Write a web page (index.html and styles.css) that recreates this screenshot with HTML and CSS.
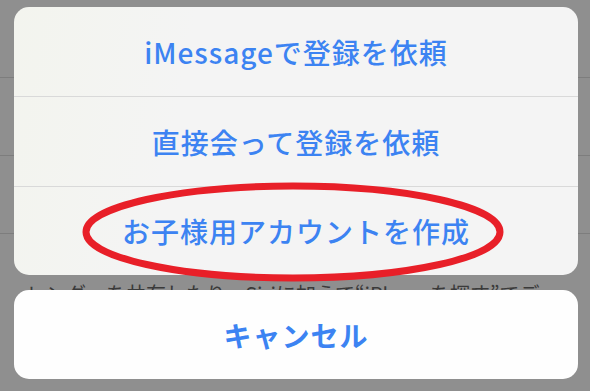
FILE: index.html
```html
<!DOCTYPE html>
<html lang="ja">
<head>
<meta charset="UTF-8" />
<meta name="viewport" content="width=device-width, initial-scale=1.0" />
<title>アクションシート</title>
<link rel="stylesheet" href="styles.css">
</head>
<body>
<div id="screen">
  <div class="backdrop">
    <div class="bg-row"></div>
    <div class="bg-row"></div>
    <div class="bg-row"></div>
    <p class="bg-text">レンダーを共有したり、Siriに加えて“iPhoneを探す”でデ</p>
  </div>

  <div class="sheet">
    <div class="group">
      <div class="action">iMessageで登録を依頼</div>
      <div class="action">直接会って登録を依頼</div>
      <div class="action">お子様用アカウントを作成</div>
    </div>
    <div class="cancel">キャンセル</div>
  </div>

  <svg class="mark" width="590" height="391" viewBox="0 0 590 391">
    <ellipse cx="293" cy="232" rx="207" ry="46" fill="none" stroke="#e81f28" stroke-width="7" />
  </svg>
</div>
</body>
</html>
```

FILE: styles.css
```css
body {
  margin: 0;
  background-color: #8f8f8f;
  font-family: "Noto Sans CJK JP", "Noto Sans", sans-serif;
}
#screen {
  position: relative;
  display: grid;
  grid-template-columns: minmax(0, 1fr);
  width: 590px;
  height: 391px;
  overflow: hidden;
}
.backdrop,
.sheet {
  grid-area: 1 / 1;
  min-width: 0;
}
.backdrop {
  overflow: hidden;
}
.bg-row {
  height: 77px;
  border-bottom: 1px solid #7d7d7d;
}
.bg-text {
  margin: 47px 0 0 26px;
  font-size: 20px;
  line-height: 26px;
  white-space: nowrap;
  color: #3a3a3a;
}
.sheet {
  display: flex;
  flex-direction: column;
  gap: 15px;
  padding: 7px 12px 0 14px;
}
.group {
  display: flex;
  flex-direction: column;
  border-radius: 15px;
  overflow: hidden;
  background: linear-gradient(100deg, #f3f4ee 0%, #f4f4f4 30%, #f4f4f4 100%);
}
.action,
.cancel {
  display: flex;
  justify-content: center;
  align-items: center;
  font-size: 28px;
  font-weight: 500;
  letter-spacing: 1px;
  color: #3c83f2;
}
.action {
  height: 89px;
}
.action + .action {
  border-top: 1px solid #d9d9d9;
}
.action:last-child {
  height: 88px;
}
.cancel {
  height: 89px;
  border-radius: 15px;
  background-color: #fefefe;
  font-weight: 700;
}
.mark {
  position: absolute;
  left: 0;
  top: 0;
}
```
